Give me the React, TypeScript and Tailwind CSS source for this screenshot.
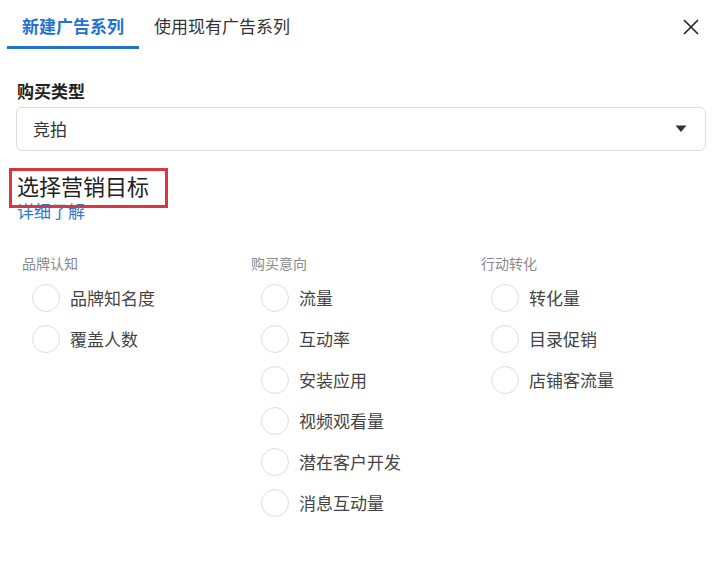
import React from "react";

const font = { fontFamily: '"Noto Sans CJK SC", "Noto Sans", sans-serif' };

const cols = [
  { title: "品牌认知", items: ["品牌知名度", "覆盖人数"] },
  { title: "购买意向", items: ["流量", "互动率", "安装应用", "视频观看量", "潜在客户开发", "消息互动量"] },
  { title: "行动转化", items: ["转化量", "目录促销", "店铺客流量"] },
];

export default function App() {
  return (
    <div className="w-[720px] h-[583px] bg-white overflow-hidden text-[#333]" style={font}>
      <div className="flex items-start justify-between">
        <div className="flex pl-[7px]">
          <div className="h-[49px] px-[15px] pt-[14px] text-[17px] leading-[24px] font-bold text-[#2471d2] border-b-[3px] border-[#2471d2]">
            新建广告系列
          </div>
          <div className="h-[49px] px-[15px] pt-[14px] text-[17px] leading-[24px] text-[#333]">
            使用现有广告系列
          </div>
        </div>
        <button className="mt-[18px] mr-[20px] w-[18px] h-[18px] flex items-center justify-center text-[#222]">
          <svg width="18" height="18" viewBox="0 0 18 18" fill="none" stroke="currentColor" strokeWidth="1.6">
            <path d="M2 2 L16 16 M16 2 L2 16" />
          </svg>
        </button>
      </div>

      <div className="pl-[16px] pr-[14px]">
        <div className="mt-[30px] pl-[1px] text-[17px] leading-[24px] font-bold text-[#222]">购买类型</div>
        <div className="mt-[4px] h-[44px] rounded-[6px] border border-[#dcdcdc] flex items-center justify-between pl-[16px] pr-[18px]">
          <span className="text-[17px] text-[#333]">竞拍</span>
          <svg width="12" height="8" viewBox="0 0 12 8">
            <path d="M0.5 0.5 H11.5 L6 7 Z" fill="#333" />
          </svg>
        </div>
      </div>

      <div className="relative pl-[17px] mt-[20px]">
        <div className="text-[22px] leading-[28px] text-[#222]">选择营销目标</div>
        <div className="text-[17px] leading-[24px] text-[#2d78d2]">详细了解</div>
        <div className="absolute left-[9px] top-[-3px] w-[159px] h-[40px] border-[3px] border-[#d9363e]" />
      </div>

      <div className="grid grid-cols-[229px_230px_230px] pl-[22px] mt-[31px]">
        {cols.map((c) => (
          <div key={c.title}>
            <div className="text-[14px] leading-[18px] text-[#8a8a8a]">{c.title}</div>
            <div className="mt-[5px] flex flex-col">
              {c.items.map((it) => (
                <div key={it} className="h-[41px] flex items-center pl-[10px] gap-[10px]">
                  <span className="w-[28px] h-[28px] rounded-full border-[1.5px] border-[#dedede] bg-white" />
                  <span className="text-[17px] text-[#444]">{it}</span>
                </div>
              ))}
            </div>
          </div>
        ))}
      </div>
    </div>
  );
}
